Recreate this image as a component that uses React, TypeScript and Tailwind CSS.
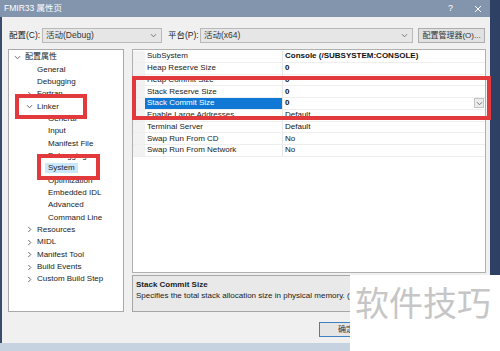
type TreeNode = {
  label: string;
  level: 0 | 1 | 2;
  chevron?: "down" | "right";
  selected?: boolean;
};

const tree: TreeNode[] = [
  { label: "配置属性", level: 0, chevron: "down" },
  { label: "General", level: 1 },
  { label: "Debugging", level: 1 },
  { label: "Fortran", level: 1, chevron: "right" },
  { label: "Linker", level: 1, chevron: "down" },
  { label: "General", level: 2 },
  { label: "Input", level: 2 },
  { label: "Manifest File", level: 2 },
  { label: "Debugging", level: 2 },
  { label: "System", level: 2, selected: true },
  { label: "Optimization", level: 2 },
  { label: "Embedded IDL", level: 2 },
  { label: "Advanced", level: 2 },
  { label: "Command Line", level: 2 },
  { label: "Resources", level: 1, chevron: "right" },
  { label: "MIDL", level: 1, chevron: "right" },
  { label: "Manifest Tool", level: 1, chevron: "right" },
  { label: "Build Events", level: 1, chevron: "right" },
  { label: "Custom Build Step", level: 1, chevron: "right" },
];

const props: { name: string; value: string; bold: boolean; selected?: boolean }[] = [
  { name: "SubSystem", value: "Console (/SUBSYSTEM:CONSOLE)", bold: true },
  { name: "Heap Reserve Size", value: "0", bold: true },
  { name: "Heap Commit Size", value: "0", bold: true },
  { name: "Stack Reserve Size", value: "0", bold: true },
  { name: "Stack Commit Size", value: "0", bold: true, selected: true },
  { name: "Enable Large Addresses", value: "Default", bold: false },
  { name: "Terminal Server", value: "Default", bold: false },
  { name: "Swap Run From CD", value: "No", bold: false },
  { name: "Swap Run From Network", value: "No", bold: false },
];

const indent = ["pl-[3px]", "pl-[15px]", "pl-[26px]"];

function Chevron({ dir, className }: { dir: "down" | "right"; className?: string }) {
  return (
    <svg width="7" height="7" viewBox="0 0 7 7" className={className}>
      {dir === "down" ? (
        <path d="M1 2.2 L3.5 4.8 L6 2.2" fill="none" stroke="currentColor" strokeWidth="1" />
      ) : (
        <path d="M2.3 1 L4.8 3.5 L2.3 6" fill="none" stroke="currentColor" strokeWidth="1" />
      )}
    </svg>
  );
}

function Combo({ text, width }: { text: string; width: string }) {
  return (
    <div className={`${width} flex h-[15px] items-center justify-between border border-[#b9b9b9] bg-[#e6e6e6] pl-[3px] pr-[4px]`}>
      <span className="text-[8.5px] text-[#333]">{text}</span>
      <Chevron dir="down" className="text-[#777]" />
    </div>
  );
}

function TreePanel() {
  return (
    <div className="ml-[6px] h-full w-[116px] border border-[#a9a9a9] bg-white pt-[1px]">
      {tree.map((n, i) => (
        <div key={i} className={`flex h-[12.35px] items-center ${indent[n.level]}`}>
          <div className="flex w-[10px] justify-center text-[#6a6a6a]">
            {n.chevron && <Chevron dir={n.chevron} />}
          </div>
          <span
            className={
              n.selected
                ? "ml-0 bg-[#cce8ff] px-[3px] leading-[10px] text-[#222]"
                : "ml-[3px] text-[#222]"
            }
          >
            {n.label}
          </span>
        </div>
      ))}
    </div>
  );
}

function PropertyGrid() {
  return (
    <div className="h-[224px] w-[354px] border border-[#b0b0b0] bg-white pt-[1px]">
      {props.map((p) => (
        <div key={p.name} className="flex h-[11.75px] border-b border-[#eeeeee]">
          <div className="w-[12px] bg-[#f2f2f2]" />
          <div
            className={`flex w-[138px] items-center border-r border-[#e6e6e6] pl-[2px] ${
              p.selected ? "bg-[#0f78d4] text-white" : "text-[#222]"
            }`}
          >
            {p.name}
          </div>
          <div className="flex flex-1 items-center justify-between pl-[2px] pr-[1px] text-[#111]">
            <span className={p.bold ? "font-bold" : ""}>{p.value}</span>
            {p.selected && (
              <div className="flex h-[10px] w-[10px] items-center justify-center border border-[#c4c4c4] bg-[#ececec] text-[#777]">
                <Chevron dir="down" />
              </div>
            )}
          </div>
        </div>
      ))}
    </div>
  );
}

export default function App() {
  return (
    <div className="relative flex h-[351px] w-[500px] overflow-hidden bg-[#2e4164] font-['Liberation_Sans','Noto_Sans_CJK_SC',sans-serif] text-[8px]">
      <div className="flex w-[490px] flex-col">
        <div className="flex h-[17px] items-center bg-[#8394ad] pl-[4px] text-[8.5px] text-white">
          <span>FMIR33 属性页</span>
          <span className="ml-auto mr-[21px] text-[9px]">?</span>
          <svg width="8" height="8" viewBox="0 0 8 8" className="mr-[8px] text-white">
            <path d="M1 1 L7 7 M7 1 L1 7" stroke="currentColor" strokeWidth="1" />
          </svg>
        </div>

        <div className="flex flex-1">
          <div className="w-[2px] bg-[#3b4d6c]" />
          <div className="flex flex-1 flex-col bg-[#f0f0f0]">
            <div className="mt-[11px] flex h-[15px] items-center pl-[7px]">
              <span className="w-[33px] text-[8.5px] text-[#222]">配置(C):</span>
              <Combo text="活动(Debug)" width="w-[120px]" />
              <span className="ml-[6px] w-[32px] text-[8.5px] text-[#222]">平台(P):</span>
              <Combo text="活动(x64)" width="w-[213px]" />
              <div className="ml-[5px] flex h-[15px] w-[67px] items-center justify-center border border-[#adadad] bg-[#e1e1e1] text-[8px] text-[#333]">
                配置管理器(O)...
              </div>
            </div>

            <div className="mt-[6px] flex h-[263px]">
              <TreePanel />
              <div className="ml-[8px] flex flex-col">
                <PropertyGrid />
                <div className="mt-[2px] h-[37px] w-[354px] border border-[#a6a6a6] bg-[#e9e9e9] px-[3px] pt-[3px] text-[#222]">
                  <div className="h-[11px] font-bold leading-[11px]">Stack Commit Size</div>
                  <div className="h-[11px] w-[214px] overflow-hidden whitespace-nowrap leading-[11px]">
                    Specifies the total stack allocation size in physical memory. (
                  </div>
                </div>
              </div>
            </div>

            <div className="mt-[10px] flex">
              <div className="ml-[317px] flex h-[15px] w-[54px] items-center justify-center border border-[#3d80c4] bg-[#e5e5e5] text-[8px] text-[#333]">
                确定
              </div>
            </div>
          </div>
        </div>

        <div className="h-[8px] bg-[#c7d2e0]" />
      </div>

      {/* annotation boxes */}
      <div className="absolute left-[15px] top-[94px] h-[25px] w-[72px] border-4 border-[#e23a3c]" />
      <div className="absolute left-[37px] top-[154px] h-[26px] w-[63px] border-4 border-[#e23a3c]" />
      <div className="absolute left-[132px] top-[76px] h-[44px] w-[359px] border-4 border-[#e23a3c]" />

      {/* watermark */}
      <div className="absolute left-[350px] top-[275px] h-[76px] w-[150px] bg-white">
        <div className="ml-[5px] mt-[12px] text-[34px] leading-none text-[#c6c6c6]">软件技巧</div>
      </div>
    </div>
  );
}
